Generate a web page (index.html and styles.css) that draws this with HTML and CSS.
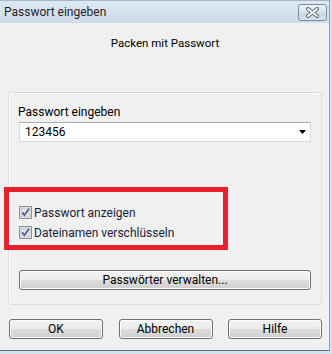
FILE: index.html
```html
<!DOCTYPE html>
<html>
<head>
<meta charset="utf-8">
<link rel="stylesheet" href="styles.css">
</head>
<body>
<div class="window">
  <div class="titlebar">
    <span class="title">Passwort eingeben</span>
    <div class="close">
      <svg width="15" height="11" viewBox="0 0 15 11">
        <path d="M3 2 L12 9 M12 2 L3 9" stroke="#5c6b80" stroke-width="4" stroke-linecap="round" fill="none"/>
        <path d="M3 2 L12 9 M12 2 L3 9" stroke="#ffffff" stroke-width="2" stroke-linecap="round" fill="none"/>
      </svg>
    </div>
  </div>
  <div class="client">
    <div class="heading">Packen mit Passwort</div>
    <div class="group">
      <div class="label">Passwort eingeben</div>
      <div class="combo">
        <span>123456</span>
        <svg width="7" height="4" viewBox="0 0 7 4"><path d="M0 0 H7 L3.5 4 Z" fill="#000"/></svg>
      </div>
      <div class="checks">
        <div class="check">
          <svg width="13" height="13" viewBox="0 0 13 13">
            <rect x="0.5" y="0.5" width="12" height="12" fill="#f4f4f4" stroke="#8e8f8f"/>
            <rect x="2" y="2" width="9" height="9" fill="#dfe2e8" stroke="#b7bcc6" stroke-width="0.8"/>
            <path d="M3.2 6.4 L5.4 9.2 L10 2.8" stroke="#4a5c8c" stroke-width="1.7" fill="none"/>
          </svg>
          <span>Passwort anzeigen</span>
        </div>
        <div class="check">
          <svg width="13" height="13" viewBox="0 0 13 13">
            <rect x="0.5" y="0.5" width="12" height="12" fill="#f4f4f4" stroke="#8e8f8f"/>
            <rect x="2" y="2" width="9" height="9" fill="#dfe2e8" stroke="#b7bcc6" stroke-width="0.8"/>
            <path d="M3.2 6.4 L5.4 9.2 L10 2.8" stroke="#4a5c8c" stroke-width="1.7" fill="none"/>
          </svg>
          <span>Dateinamen verschlüsseln</span>
        </div>
        <div class="highlight"></div>
      </div>
      <div class="btn wide">Passwörter verwalten...</div>
    </div>
    <div class="buttons">
      <div class="btn">OK</div>
      <div class="btn">Abbrechen</div>
      <div class="btn">Hilfe</div>
    </div>
  </div>
</div>
</body>
</html>
```
FILE: styles.css
```css
* { box-sizing: border-box; }
html, body {
  margin: 0;
  padding: 0;
  background: #d6e2ef;
}
body {
  width: 332px;
  height: 354px;
  overflow: hidden;
  font-family: Roboto, "Noto Sans", sans-serif;
  font-size: 12px;
  color: #000;
}
.window {
  width: 330px;
  height: 351px;
  border-right: 1px solid #8d9bad;
  border-bottom: 1px solid #5d6775;
  background: #f0f0f0;
  display: flex;
  flex-direction: column;
}
.titlebar {
  height: 23px;
  border-top: 1px solid #a9b6c4;
  background: linear-gradient(#dde8f4, #cddbeb);
  display: flex;
  align-items: center;
  justify-content: space-between;
  padding: 0 2px 0 4px;
}
.title {
  font-size: 12px;
  color: #1f1f1f;
  line-height: 16px;
  margin-top: -1px;
}
.close {
  width: 29px;
  height: 17px;
  margin-top: 1px;
  border: 1px solid #7d8ba0;
  border-radius: 3px;
  background: linear-gradient(#eef3f9, #d7e1ed 50%, #c9d6e5 51%, #d5e0ec);
  display: flex;
  align-items: center;
  justify-content: center;
}
.client {
  flex: 1;
  display: flex;
  flex-direction: column;
  padding: 0 0 0 8px;
}
.heading {
  text-align: center;
  line-height: 16px;
  margin-top: 12px;
  padding-right: 7px;
  font-size: 11.5px;
}
.group {
  margin-top: 41px;
  width: 314px;
  height: 213px;
  border: 1px solid #d5dfe5;
  border-radius: 3px;
  box-shadow: inset 1px 1px 0 #fff;
  padding: 11px 10px 0 9px;
  display: flex;
  flex-direction: column;
}
.label {
  line-height: 16px;
}
.combo {
  margin-top: 2px;
  margin-left: 1px;
  height: 20px;
  background: #fff;
  border: 1px solid #d8dade;
  border-top-color: #abadb3;
  display: flex;
  align-items: center;
  justify-content: space-between;
  padding: 0 4px 0 5px;
}
.combo span { line-height: 16px; }
.checks {
  position: relative;
  margin-top: 64px;
  margin-left: 1px;
  display: flex;
  flex-direction: column;
  gap: 7px;
}
.check {
  display: flex;
  align-items: center;
  gap: 2px;
  height: 13px;
  color: #1a1e38;
}
.check svg { flex: none; }
.highlight {
  position: absolute;
  left: -15px;
  top: -19px;
  width: 224px;
  height: 63px;
  border: 5px solid #e8202c;
}
.btn {
  height: 20px;
  width: 94px;
  border: 1px solid #707070;
  border-radius: 3px;
  background: linear-gradient(#f2f2f2, #ebebeb 49%, #dddddd 50%, #cfcfcf);
  box-shadow: inset 0 0 0 1px #fcfcfc;
  display: flex;
  align-items: center;
  justify-content: center;
  line-height: 16px;
}
.btn.wide {
  width: 292px;
  margin-top: 31px;
  margin-left: 1px;
}
.buttons {
  margin-top: 14px;
  padding: 0 0 0 1px;
  width: 314px;
  display: flex;
  justify-content: space-between;
}
```
